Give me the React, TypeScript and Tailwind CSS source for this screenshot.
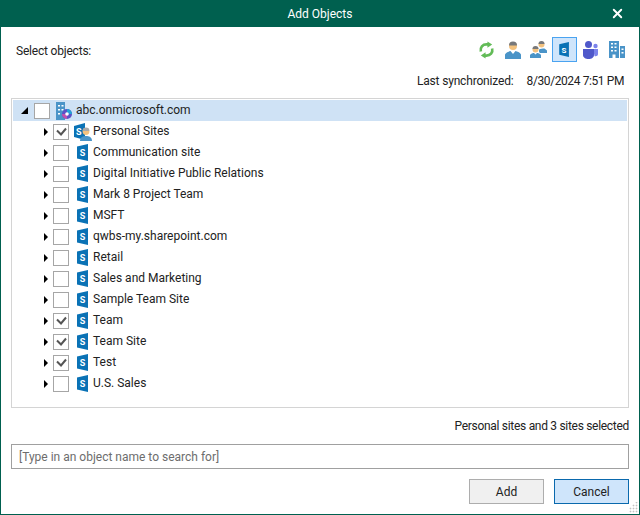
import React from "react";
import { X } from "lucide-react";

function SiteIcon({ small }: { small?: boolean }) {
  return (
    <svg width={small ? 13 : 14} height={small ? 15 : 17} viewBox="0 0 14 17" className="shrink-0">
      <path d="M1 2.5 L12 0 V17 L1 14.5 Z" fill="#0a72b5" />
      <text x="6.5" y="12" textAnchor="middle" fontSize="9" fontWeight="700" fill="#fff" fontFamily="Roboto, sans-serif">S</text>
    </svg>
  );
}

function PersonalIcon() {
  return (
    <svg width="18" height="18" viewBox="0 0 18 18" className="shrink-0">
      <path d="M0 3 L11 0 V17 L0 14 Z" fill="#0a72b5" />
      <text x="4.8" y="11.5" textAnchor="middle" fontSize="9" fontWeight="700" fill="#fff" fontFamily="Roboto, sans-serif">S</text>
      <circle cx="12" cy="8.5" r="3.4" fill="#f3c27f" />
      <path d="M8.6 8 A3.4 3.4 0 0 1 15.4 8 Z" fill="#a9a9a9" />
      <path d="M6 18 C6 14 9 13 12 13 C15 13 18 14 18 18 Z" fill="#4a94c8" />
    </svg>
  );
}

function OrgIcon() {
  return (
    <svg width="18" height="18" viewBox="0 0 18 18" className="shrink-0">
      <path d="M1 0 H10 V18 H1 Z" fill="#4a94c8" />
      <path d="M3 3h2v1.5H3zM6.5 3h2v1.5h-2zM3 7h2v1.5H3zM6.5 7h2v1.5h-2zM3 11h2v1.5H3z" fill="#fff" />
      <circle cx="12" cy="12" r="5" fill="#5b52c7" />
      <path d="M12 7 A5 5 0 0 1 17 12 L13.8 12 A1.8 1.8 0 0 0 12 10.2 Z" fill="#22a3d6" />
      <path d="M7 12 A5 5 0 0 0 12 17 L12 13.8 A1.8 1.8 0 0 1 10.2 12 Z" fill="#c04fb0" />
      <circle cx="12" cy="12" r="1.8" fill="#fff" />
    </svg>
  );
}

function SyncIcon() {
  return (
    <svg width="17" height="18" viewBox="0 0 18 18">
      <path d="M3 10.5 C2 6 5 3 9 3 H11" fill="none" stroke="#62bb57" strokeWidth="2.8" />
      <path d="M10 0 L15 3.2 L10 6.6 Z" fill="#62bb57" />
      <path d="M15 7.5 C16 12 13 15 9 15 H7" fill="none" stroke="#62bb57" strokeWidth="2.8" />
      <path d="M8 11.4 L3 14.8 L8 18 Z" fill="#62bb57" />
    </svg>
  );
}

function UserIcon() {
  return (
    <svg width="16" height="18" viewBox="0 0 16 18">
      <circle cx="8" cy="5" r="4" fill="#f3c27f" />
      <path d="M4 4.4 A4 4 0 0 1 12 4.4 Z" fill="#77787b" />
      <path d="M0 18 V13.5 C1 11 4 10.5 5.5 10 L8 13 L10.5 10 C12 10.5 15 11 16 13.5 V18 Z" fill="#4a94c8" />
    </svg>
  );
}

function GroupIcon() {
  return (
    <svg width="17" height="17" viewBox="0 0 17 17">
      <circle cx="11.5" cy="3.5" r="3" fill="#f3c27f" />
      <path d="M8.5 3 A3 3 0 0 1 14.5 3 Z" fill="#77787b" />
      <path d="M9 11 V8.5 C10 7.5 13 7.5 14.5 7.5 L17 9.5 V12 H10 Z" fill="#4a94c8" />
      <circle cx="5.5" cy="8.5" r="3" fill="#f3c27f" />
      <path d="M2.5 8 A3 3 0 0 1 8.5 8 Z" fill="#77787b" />
      <path d="M0 17 V14 C1 12.5 3 12 4 12 L5.5 13.5 L7 12 C8 12 10 12.5 11 14 V17 Z" fill="#4a94c8" />
    </svg>
  );
}

function TeamsIcon() {
  return (
    <svg width="15" height="18" viewBox="0 0 15 18">
      <circle cx="5.5" cy="3.5" r="3.5" fill="#4f58ca" />
      <circle cx="12.5" cy="5" r="2.2" fill="#7b83eb" />
      <path d="M10 8 H15 V13 C15 15 13 15.5 11.5 15 Z" fill="#7b83eb" />
      <path d="M0 8 H11 V14 C11 16.5 8.5 18 5.5 18 C2.5 18 0 16.5 0 14 Z" fill="#4f58ca" />
    </svg>
  );
}

function BuildingIcon() {
  return (
    <svg width="16" height="17" viewBox="0 0 16 17">
      <path d="M0 0 H10 V17 H6.5 V13.5 H3.5 V17 H0 Z" fill="#4a94c8" />
      <path d="M11 5 H16 V17 H11 Z" fill="#4a94c8" />
      <path d="M2 2h2v1.5H2zM5.5 2h2v1.5h-2zM2 5.5h2V7H2zM5.5 5.5h2V7h-2zM2 9h2v1.5H2zM5.5 9h2v1.5h-2zM12.5 7.5h2V9h-2zM12.5 11h2v1.5h-2z" fill="#fff" />
    </svg>
  );
}

function Check() {
  return (
    <svg width="11" height="9" viewBox="0 0 11 9">
      <path d="M1 3.5 L5 7.5 L10 1.5" fill="none" stroke="#555" strokeWidth="2" />
    </svg>
  );
}

function Box({ checked }: { checked?: boolean }) {
  return (
    <div className="flex size-4 shrink-0 items-center justify-center border border-[#a6a6a6] bg-white">
      {checked && <Check />}
    </div>
  );
}

const sites = [
  { name: "Communication site" },
  { name: "Digital Initiative Public Relations" },
  { name: "Mark 8 Project Team" },
  { name: "MSFT" },
  { name: "qwbs-my.sharepoint.com" },
  { name: "Retail" },
  { name: "Sales and Marketing" },
  { name: "Sample Team Site" },
  { name: "Team", checked: true },
  { name: "Team Site", checked: true },
  { name: "Test", checked: true },
  { name: "U.S. Sales" },
];

function Row({ name, checked, icon }: { name: string; checked?: boolean; icon: React.ReactNode }) {
  return (
    <div className="flex h-[21px] items-center pl-[31px]">
      <div className="mr-[5px] h-0 w-0 border-y-[4px] border-l-[4px] border-y-transparent border-l-black" />
      <Box checked={checked} />
      <div className="ml-[5px] flex w-[17px] shrink-0 justify-center">{icon}</div>
      <span className="mb-[2px] ml-[2px] text-[#222]">{name}</span>
    </div>
  );
}

export default function App() {
  return (
    <div className="relative flex h-[515px] w-[640px] flex-col overflow-hidden border-x border-b border-[#00604f] bg-white font-['Roboto',sans-serif] text-[12px] text-[#222]">
      <div className="relative flex h-[27px] shrink-0 items-center justify-center bg-[#00604f] text-white">
        Add Objects
        <X className="absolute right-[14px] top-[6px] size-[15px]" strokeWidth={3} />
      </div>

      <div className="flex h-[45px] shrink-0 items-center justify-between pl-[15px] pr-[10px]">
        <span className="mt-[2px] tracking-[-0.2px]">Select objects:</span>
        <div className="flex items-center gap-px">
          <div className="flex w-[25px] justify-center"><SyncIcon /></div>
          <div className="flex w-[25px] justify-center"><UserIcon /></div>
          <div className="flex w-[25px] justify-center"><GroupIcon /></div>
          <div className="flex h-[25px] w-[25px] items-center justify-center border border-[#4aa3f0] bg-[#cfe5fb]"><SiteIcon small /></div>
          <div className="flex w-[25px] justify-center"><TeamsIcon /></div>
          <div className="flex w-[25px] justify-center"><BuildingIcon /></div>
        </div>
      </div>

      <div className="flex h-[26px] shrink-0 items-start justify-end gap-[13px] pr-[15px]">
        <span className="tracking-[-0.17px]">Last synchronized:</span>
        <span className="tracking-[-0.4px]">8/30/2024 7:51 PM</span>
      </div>

      <div className="mx-[10px] h-[310px] shrink-0 border border-[#d4d4d4] p-[1px]">
        <div className="flex h-[21px] items-center bg-[#cfe2f5] pl-[8px]">
          <div className="mr-[6px] h-0 w-0 border-b-[7px] border-l-[7px] border-b-black border-l-transparent" />
          <Box />
          <div className="ml-[5px] flex shrink-0"><OrgIcon /></div>
          <span className="mb-[2px] ml-[3px]">abc.onmicrosoft.com</span>
        </div>
        <Row name="Personal Sites" checked icon={<PersonalIcon />} />
        {sites.map((s) => (
          <Row key={s.name} name={s.name} checked={s.checked} icon={<SiteIcon />} />
        ))}
      </div>

      <div className="mr-[10px] mt-[9px] h-[27px] shrink-0 text-right tracking-[-0.3px]">Personal sites and 3 sites selected</div>

      <div className="mx-[10px] flex h-[25px] shrink-0 items-center border border-[#a0a0a0] px-[7px] text-[#6d6d6d]">
        [Type in an object name to search for]
      </div>

      <div className="mr-[10px] mt-[10px] flex justify-end gap-[10px]">
        <button className="h-[25px] w-[75px] border border-[#adadad] bg-[#f0f0f0]">Add</button>
        <button className="h-[25px] w-[75px] border border-[#0a69ad] bg-[#cfe5fb]">Cancel</button>
      </div>

      <svg width="10" height="11" viewBox="0 0 10 11" className="absolute bottom-[1px] right-[1px] text-[#c4c4c4]">
        <path d="M8 0h1v1H8zM8 3h1v1H8zM5 3h1v1H5zM8 6h1v1H8zM5 6h1v1H5zM2 6h1v1H2zM8 9h1v1H8zM5 9h1v1H5zM2 9h1v1H2z" fill="currentColor" stroke="currentColor" strokeWidth="0.6" />
      </svg>
    </div>
  );
}
